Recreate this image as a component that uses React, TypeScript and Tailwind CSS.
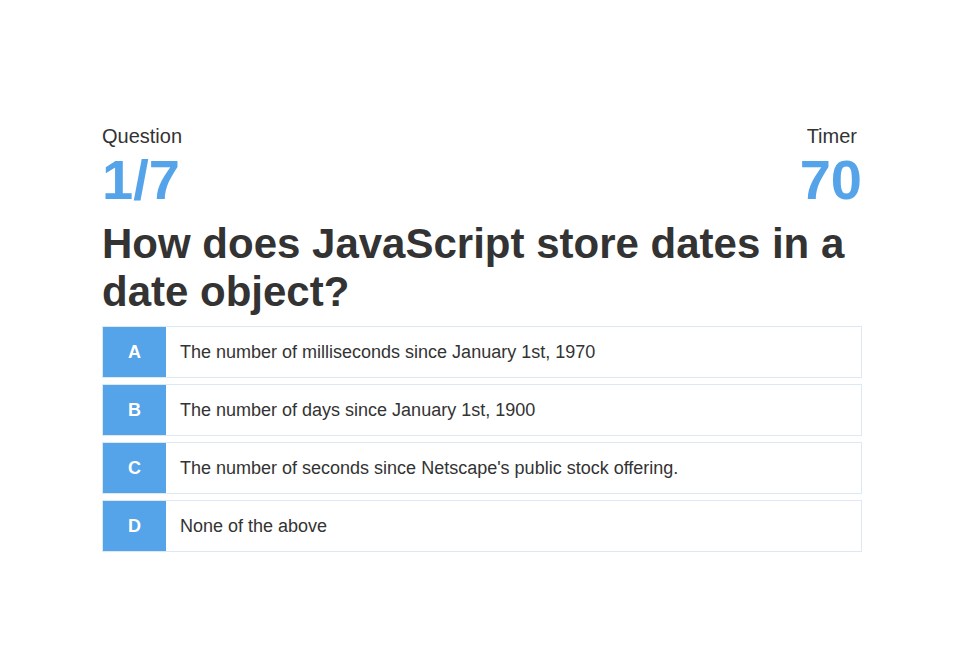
import type { FC } from 'react';

const answers = [
    { key: 'A', text: 'The number of milliseconds since January 1st, 1970' },
    { key: 'B', text: 'The number of days since January 1st, 1900' },
    { key: 'C', text: "The number of seconds since Netscape's public stock offering." },
    { key: 'D', text: 'None of the above' },
];

const App: FC = () => {
    return (
        <div className="min-h-screen bg-white text-[#333] font-['Liberation_Sans',Arial,sans-serif]">
            <div className="ml-[102px] w-[760px] pt-[125px]">
                <div className="flex justify-between">
                    <div>
                        <div className="text-[20px] leading-[23px]">Question</div>
                        <div className="text-[56px] leading-[63px] font-bold text-[#55a3e8]">1/7</div>
                    </div>
                    <div className="text-right">
                        <div className="text-[20px] leading-[23px] pr-[5px]">Timer</div>
                        <div className="text-[56px] leading-[63px] font-bold text-[#55a3e8]">70</div>
                    </div>
                </div>

                <h1 className="mt-[9px] text-[42px] leading-[48px] font-bold text-[#333]">
                    How does JavaScript store dates in a date object?
                </h1>

                <ul className="mt-[10px] flex flex-col gap-[6px]">
                    {answers.map((a) => (
                        <li key={a.key} className="flex h-[52px] border border-[#dce8f3] bg-white">
                            <div className="flex w-[63px] items-center justify-center bg-[#55a3e8] text-[18px] font-bold text-white">
                                {a.key}
                            </div>
                            <div className="flex items-center pl-[14px] text-[18px] text-[#333]">{a.text}</div>
                        </li>
                    ))}
                </ul>
            </div>
        </div>
    );
};

export default App;
